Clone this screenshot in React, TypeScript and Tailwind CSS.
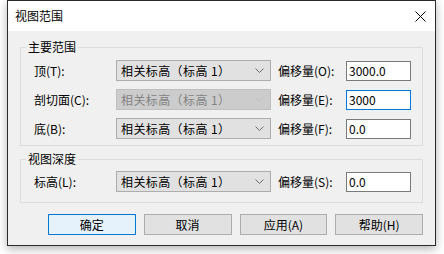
import React from 'react'

const font = { fontFamily: '"Noto Sans CJK SC", "Noto Sans", sans-serif' }

function Chevron({ disabled }: { disabled?: boolean }) {
  return (
    <svg width="9" height="6" viewBox="0 0 9 6" className="shrink-0">
      <polyline points="0.5,0.5 4.5,4.5 8.5,0.5" fill="none" stroke={disabled ? '#bcbcbc' : '#6d6d6d'} strokeWidth="1" />
    </svg>
  )
}

function Combo({ disabled }: { disabled?: boolean }) {
  return (
    <div
      className={`w-[155px] h-[21px] flex items-center justify-between pl-[4px] pr-[6px] border ${
        disabled ? 'bg-[#cccccc] border-[#bfbfbf] text-[#838383]' : 'bg-[#e1e1e1] border-[#adadad] text-black'
      }`}
    >
      <span className="text-[12px] leading-none whitespace-nowrap tracking-[0.4px]">相关标高（标高 1）</span>
      <Chevron disabled={disabled} />
    </div>
  )
}

function Field({ value, focused }: { value: string; focused?: boolean }) {
  return (
    <div
      className={`w-[65px] h-[20px] flex items-center pl-[2px] bg-white border ${
        focused ? 'border-[#0078d7]' : 'border-[#7a7a7a]'
      }`}
    >
      <span className="text-[12px] leading-none text-black">{value}</span>
    </div>
  )
}

function Row({ label, offset, value, disabled, focused }: { label: string; offset: string; value: string; disabled?: boolean; focused?: boolean }) {
  return (
    <div className="flex items-center h-[21px]">
      <span className="w-[82px] text-[12px] text-black whitespace-nowrap">{label}</span>
      <Combo disabled={disabled} />
      <span className="ml-[7px] w-[68px] text-[12px] text-black whitespace-nowrap">{offset}</span>
      <Field value={value} focused={focused} />
    </div>
  )
}

function Group({ title, children, className }: { title: string; children: React.ReactNode; className?: string }) {
  return (
    <div className={`relative border border-[#dcdcdc] pl-[13px] ${className ?? ''}`}>
      <span className="absolute left-[5px] top-[-9px] px-[2px] bg-[#f0f0f0] text-[12px] leading-[16px] text-black">{title}</span>
      {children}
    </div>
  )
}

function Btn({ label, primary }: { label: string; primary?: boolean }) {
  return (
    <div
      className={`w-[88px] h-[21px] flex items-center justify-center text-[12px] text-black border ${
        primary ? 'bg-[#e5f1fb] border-[#0078d7]' : 'bg-[#e1e1e1] border-[#adadad]'
      }`}
    >
      {label}
    </div>
  )
}

export default function App() {
  return (
    <div className="w-[444px] h-[254px] bg-white overflow-hidden" style={font}>
      <div className="ml-[7px] w-[429px] h-[246px] border border-[#2b2b2b] bg-[#f0f0f0] flex flex-col shadow-[0_3px_9px_rgba(0,0,0,0.3)]">
        <div className="h-[30px] bg-white flex items-center justify-between pl-[7px] pr-[9px] shrink-0">
          <span className="text-[12px] text-black">视图范围</span>
          <svg width="11" height="11" viewBox="0 0 11 11">
            <path d="M0.5 0.5 L10.5 10.5 M10.5 0.5 L0.5 10.5" stroke="#000" strokeWidth="1" />
          </svg>
        </div>
        <div className="flex flex-col px-[12px]">
          <Group title="主要范围" className="mt-[16px] h-[99px] pt-[12px]">
            <div className="flex flex-col gap-[8px]">
              <Row label="顶(T):" offset="偏移量(O):" value="3000.0" />
              <Row label="剖切面(C):" offset="偏移量(E):" value="3000" disabled focused />
              <Row label="底(B):" offset="偏移量(F):" value="0.0" />
            </div>
          </Group>
          <Group title="视图深度" className="mt-[13px] h-[44px] pt-[11px]">
            <Row label="标高(L):" offset="偏移量(S):" value="0.0" />
          </Group>
          <div className="mt-[11px] flex gap-[8px] pl-[28px]">
            <Btn label="确定" primary />
            <Btn label="取消" />
            <Btn label="应用(A)" />
            <Btn label="帮助(H)" />
          </div>
        </div>
      </div>
    </div>
  )
}
